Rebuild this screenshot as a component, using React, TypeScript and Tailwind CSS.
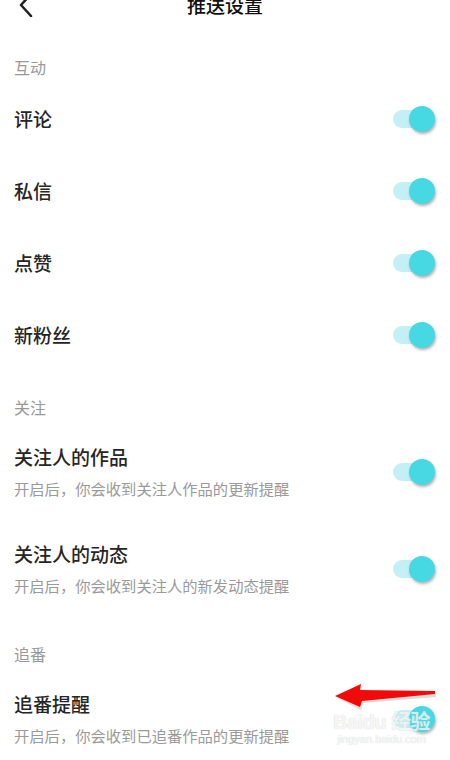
import React from 'react';

const Toggle = () => (
  <div className="relative w-[42px] h-[26px] shrink-0">
    <div className="absolute left-0 top-[4px] w-[36px] h-[18px] rounded-full bg-[#c4f0f5]" />
    <div className="absolute right-0 top-0 w-[26px] h-[26px] rounded-full bg-[#46d9e4] shadow-[1px_2px_3px_rgba(0,0,0,0.3)]" />
  </div>
);

const SectionLabel = ({ text, pt }: { text: string; pt: string }) => (
  <div className={`px-[14px] ${pt} text-[16px] leading-[20px] text-[#999]`}>{text}</div>
);

const SimpleRow = ({ title }: { title: string }) => (
  <div className="flex items-center justify-between h-[72px] pl-[14px] pr-[15px]">
    <span className="text-[19px] leading-[24px] font-medium text-[#262626]">{title}</span>
    <Toggle />
  </div>
);

const DetailRow = ({ title, desc }: { title: string; desc: string }) => (
  <div className="flex items-center justify-between h-[97px] pl-[14px] pr-[15px]">
    <div className="flex flex-col gap-[8px]">
      <span className="text-[19px] leading-[24px] font-medium text-[#262626]">{title}</span>
      <span className="text-[15.3px] leading-[22px] text-[#9a9a9a]">{desc}</span>
    </div>
    <Toggle />
  </div>
);

export default function App() {
  return (
    <div
      className="relative w-[450px] h-[760px] overflow-hidden bg-white"
      style={{ fontFamily: '"Noto Sans CJK SC", "Noto Sans", sans-serif' }}
    >
      <div className="relative -mt-[20px] h-[50px] flex items-center justify-center">
        <svg className="absolute left-[16px] top-[13px]" width="20" height="24" viewBox="0 0 20 24">
          <polyline points="15,1 5,12 15,23" fill="none" stroke="#222" strokeWidth="2.6" strokeLinecap="round" strokeLinejoin="round" />
        </svg>
        <span className="text-[19px] font-medium text-[#111]">推送设置</span>
      </div>

      <div className="h-[53px]">
        <SectionLabel text="互动" pt="pt-[27px]" />
      </div>
      <SimpleRow title="评论" />
      <SimpleRow title="私信" />
      <SimpleRow title="点赞" />
      <SimpleRow title="新粉丝" />

      <div className="h-[52px]">
        <SectionLabel text="关注" pt="pt-[26px]" />
      </div>
      <DetailRow title="关注人的作品" desc="开启后，你会收到关注人作品的更新提醒" />
      <DetailRow title="关注人的动态" desc="开启后，你会收到关注人的新发动态提醒" />

      <div className="h-[53px]">
        <SectionLabel text="追番" pt="pt-[27px]" />
      </div>
      <DetailRow title="追番提醒" desc="开启后，你会收到已追番作品的更新提醒" />

      {/* watermark */}
      <div className="absolute left-[333px] top-[710px] flex flex-col items-center text-[#f4f4f4] opacity-80 [text-shadow:0_0_1px_#c8c8c8]">
        <span className="text-[20px] leading-[22px] font-bold tracking-tight" style={{ fontFamily: '"Liberation Sans", sans-serif' }}>
          Baidu <span style={{ fontFamily: '"Noto Sans CJK SC", sans-serif' }}>经验</span>
        </span>
        <span className="text-[11px] leading-[12px]" style={{ fontFamily: '"Liberation Sans", sans-serif' }}>jingyan.baidu.com</span>
      </div>

      {/* red annotation arrow */}
      <svg className="absolute left-0 top-0 pointer-events-none" width="450" height="760" viewBox="0 0 450 760">
        <polygon points="337,698 362,686 361,692 436,693 436,697 363,703 361,710" fill="#999" opacity="0.35" />
        <polygon points="335,696 361,684 360,690 435,691 435,694 362,701 360,707" fill="#f00a0a" />
      </svg>
    </div>
  );
}
